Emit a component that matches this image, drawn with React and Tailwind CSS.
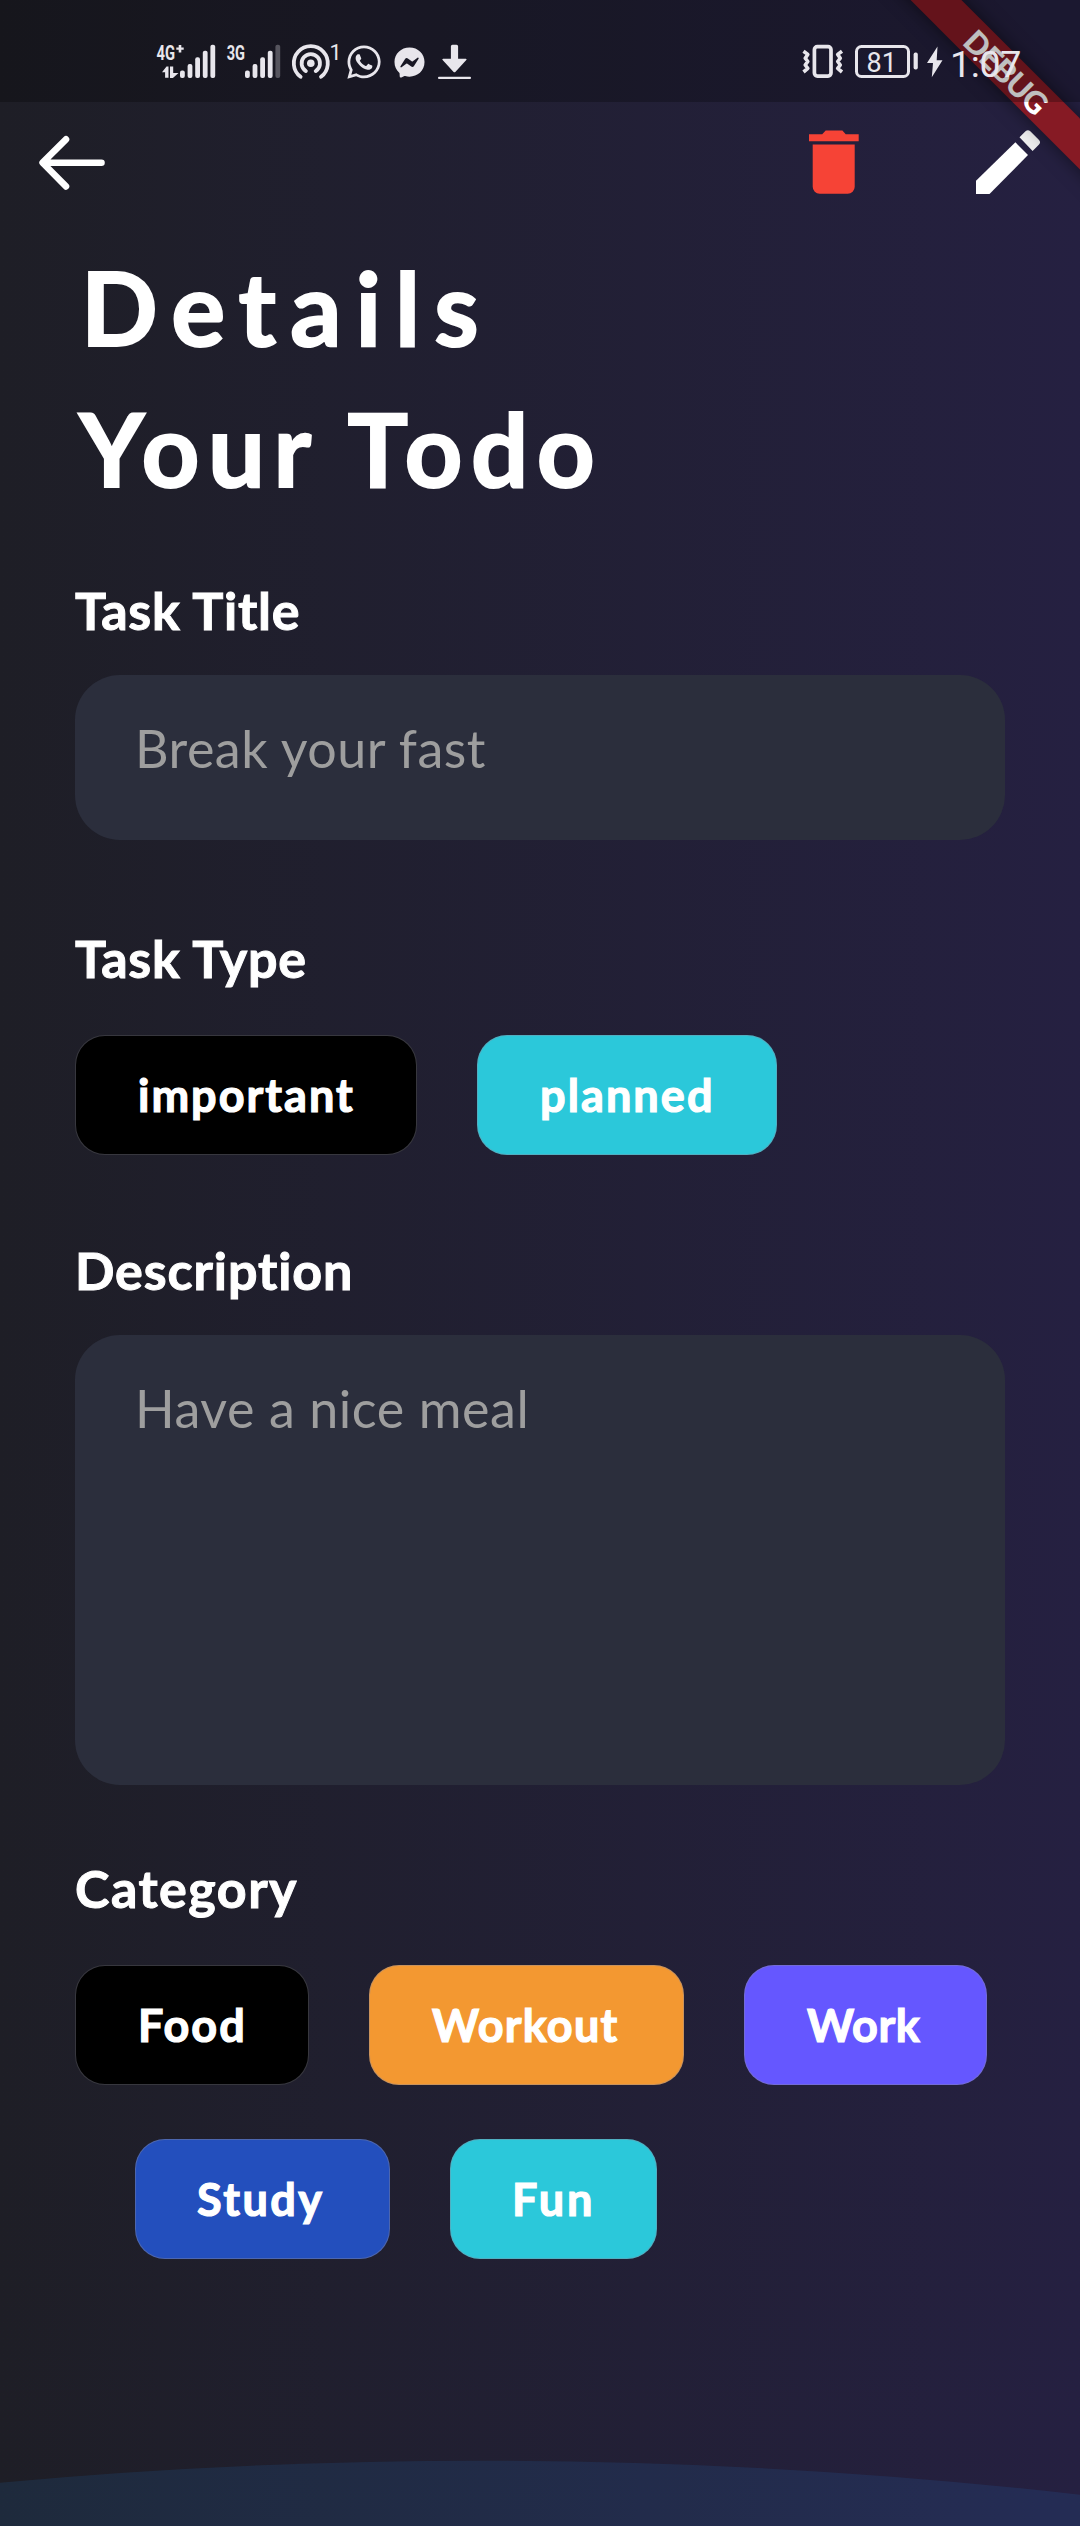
import { FaWhatsapp, FaFacebookMessenger } from "react-icons/fa";

const BAR_TOPS = [70.5, 64, 57.3, 50.7, 44.7];

function SignalBars({ start, dimLast }) {
  return BAR_TOPS.map((top, i) => (
    <rect
      key={top}
      x={start + i * 7.6}
      y={top}
      width="4.8"
      height={78 - top}
      rx="2"
      opacity={dimLast && i === 4 ? 0.3 : 1}
    />
  ));
}

function Signal4G() {
  return (
    <svg className="h-[40px] w-[60px] overflow-visible" viewBox="156 42 60 40" fill="currentColor">
      <text x="156.5" y="60" fontFamily="Roboto" fontWeight="700" fontSize="20" textLength="18.5" lengthAdjust="spacingAndGlyphs">4G</text>
      <path d="M178.7 45h2.6v2.4h2.4v2.4h-2.4v2.6h-2.6v-2.6h-2.4v-2.4h2.4z" />
      <path d="M166.5 66.5h2v11.3h-3.4v-5.6H162z" />
      <path d="M170 66.5h3.2v6.6h5.3l-5.6 4.9H170z" />
      <SignalBars start={180} />
    </svg>
  );
}

function Signal3G() {
  return (
    <svg className="h-[40px] w-[54px] overflow-visible" viewBox="227 42 54 40" fill="currentColor">
      <text x="226.7" y="60" fontFamily="Roboto" fontWeight="700" fontSize="20" textLength="18.3" lengthAdjust="spacingAndGlyphs">3G</text>
      <SignalBars start={245} dimLast />
    </svg>
  );
}

function Hotspot() {
  return (
    <svg className="h-[40px] w-[50px] overflow-visible" viewBox="290 42 50 40" fill="none" stroke="currentColor" strokeWidth="3.8" strokeLinecap="round">
      <circle cx="310.8" cy="63.3" r="3.8" fill="currentColor" stroke="none" />
      <path d="M305.9 71.1A9.2 9.2 0 1 1 315.7 71.1" />
      <path d="M300.6 76.8A17 17 0 1 1 321 76.8" />
      <text x="329.6" y="60.2" fontFamily="Roboto" fontSize="21.5" fill="currentColor" stroke="none">1</text>
    </svg>
  );
}

function Download() {
  return (
    <svg className="h-[40px] w-[34px]" viewBox="438 42 34 40" fill="currentColor">
      <path d="M452.5 44.7h4a1.6 1.6 0 0 1 1.6 1.6v12.4h7.6a.8.8 0 0 1 .6 1.4l-11 11.8a1.2 1.2 0 0 1-1.7 0l-11-11.8a.8.8 0 0 1 .6-1.4h7.7V46.3a1.6 1.6 0 0 1 1.6-1.6z" />
      <rect x="438" y="76.7" width="33" height="2.4" rx="1" />
    </svg>
  );
}

function Vibrate() {
  return (
    <svg className="h-[40px] w-[42px]" viewBox="802 42 42 40" fill="none" stroke="currentColor">
      <rect x="814.4" y="46.7" width="16.6" height="29.4" rx="3" strokeWidth="3.7" />
      <path d="M803.5 51.2l4.3 3.2-2.6 3.8 2.6 3.3-2.6 3.5 2.6 3.4-4.3 3.6M842 51.2l-4.3 3.2 2.6 3.8-2.6 3.3 2.6 3.5-2.6 3.4 4.3 3.6" strokeWidth="3.6" strokeLinejoin="round" />
    </svg>
  );
}

function Battery() {
  return (
    <svg className="h-[40px] w-[64px]" viewBox="855 42 64 40" fill="currentColor">
      <rect x="856.5" y="46.5" width="52" height="30" rx="5" fill="none" stroke="currentColor" strokeWidth="3" />
      <rect x="913.6" y="52.6" width="4.2" height="17" rx="1.8" />
      <text x="866.5" y="71.5" fontFamily="Roboto" fontSize="27" fontWeight="400">81</text>
    </svg>
  );
}

function Bolt() {
  return (
    <svg className="h-[40px] w-[16px]" viewBox="927 42 16 40" fill="currentColor">
      <path d="M937.5 46.5l-10.5 16.6h6l-1.2 14.2 10.7-17h-5.8z" />
    </svg>
  );
}

function StatusBar() {
  return (
    <header className="relative z-20 flex h-[102px] items-center bg-black/25 pt-[22px] text-[#e8e6ec]">
      <div className="ml-[156px] flex items-center">
        <Signal4G />
        <div className="ml-[11px] flex"><Signal3G /></div>
        <div className="ml-[9px] flex"><Hotspot /></div>
        <FaWhatsapp className="ml-[6px] h-[38px] w-[36px]" />
        <FaFacebookMessenger className="ml-[12px] h-[32px] w-[31px] pt-px" />
        <div className="ml-[13px] flex"><Download /></div>
      </div>
      <div className="mr-[58px] ml-auto flex items-center">
        <Vibrate />
        <div className="ml-[11px] flex"><Battery /></div>
        <div className="ml-[8px] flex"><Bolt /></div>
        <span className="mt-[4px] ml-[7px] w-[72px] font-['Roboto'] text-[37.5px] leading-[40px] font-normal tracking-[-0.3px] whitespace-nowrap">1:07</span>
      </div>
    </header>
  );
}

function DebugRibbon() {
  return (
    <div className="pointer-events-none absolute top-0 right-0 z-10 h-[300px] w-[300px] overflow-hidden">
      <div className="absolute top-[53px] left-[77px] flex h-[36px] w-[300px] rotate-45 items-center justify-center bg-[#861a24] pt-px font-['Lato'] text-[31px] leading-[36px] font-black tracking-[-0.8px] text-white shadow-[0_0_18px_rgba(0,0,0,0.5)]">
        DEBUG
      </div>
    </div>
  );
}

function Toolbar() {
  return (
    <nav className="flex h-[122px] items-center text-white">
      <button aria-label="Back" className="ml-[36px]">
        <svg className="h-[66px] w-[72px]" viewBox="36 130 72 66" fill="none" stroke="currentColor" strokeWidth="6.6" strokeLinecap="round" strokeLinejoin="round">
          <path d="M66 139.3L42.6 162.7L66 186.4M43 162.7H101.5" />
        </svg>
      </button>
      <button aria-label="Delete" className="ml-auto text-[#f64336]">
        <svg className="h-[66px] w-[50px]" viewBox="809.3 129.7 50 66" fill="currentColor">
          <path d="M809.3 134H822.5L826 130.2H842.7L846 134H859V141H809.3z" />
          <path d="M813 144.3H855V186.5a7 7 0 0 1-7 7H820a7 7 0 0 1-7-7z" />
        </svg>
      </button>
      <button aria-label="Edit" className="mr-[38px] ml-[115px]">
        <svg className="h-[66px] w-[68px]" viewBox="974 129.7 68 66" fill="currentColor">
          <path d="M1015.4 142L1028 154.7L989.5 193.7H976V180.500z" />
          <path d="M1019.5 137L1025.5 131a3.5 3.5 0 0 1 4.8 0L1038.8 139.5a3.5 3.5 0 0 1 0 5L1032.6 150.700z" fill="#eeeeee" />
        </svg>
      </button>
    </nav>
  );
}

function Label({ className, children }) {
  return <h2 className={`h-[62px] pt-px text-[52px] leading-[62px] font-bold whitespace-nowrap [-webkit-text-stroke:1px_white] ${className}`}>{children}</h2>;
}

function Chip({ className, children }) {
  return (
    <button className={`flex h-[120px] rounded-[30px] border border-[#8a8a9a]/40 pt-[32px] text-left text-[45px] leading-[54px] font-bold whitespace-nowrap [-webkit-text-stroke:1.2px_white] ${className}`}>
      {children}
    </button>
  );
}

export default function App() {
  return (
    <div className="relative h-[2526px] w-[1080px] overflow-hidden bg-linear-to-r from-[#1e1e26] to-[#252041] font-['Lato',sans-serif] text-white">
      <svg className="absolute bottom-0 left-0 h-[68px] w-[1080px]" viewBox="0 0 1080 68">
        <path d="M0 56.700V24.700Q241 2.700 482 2.700Q781 2.700 1080 36.700V68H0z" fill="#2196f3" fillOpacity="0.110" />
      </svg>
      <DebugRibbon />
      <StatusBar />
      <Toolbar />
      <main className="relative px-[75px]">
        <h1 className="mt-[13px] text-[101px] leading-[141px] font-bold whitespace-nowrap [-webkit-text-stroke:2px_white]">
          <span className="block pl-[6px] tracking-[14px]">Details</span>
          <span className="block pl-[4px] tracking-[8.5px]">Your Todo</span>
        </h1>

        <Label className="mt-[59px] tracking-[0.75px]">Task Title</Label>
        <div className="mt-[35px] h-[165px] rounded-[45px] bg-[#2b2e3c] pt-[42px] pl-[60px] text-[52px] leading-[62px] tracking-[0.5px] text-[#9e9e9e]">
          Break your fast
        </div>

        <Label className="mt-[86px] tracking-[0.75px]">Task Type</Label>
        <div className="mt-[47px] flex gap-[60px]">
          <Chip className="w-[342px] bg-black pl-[62px] tracking-[2px]">important</Chip>
          <Chip className="w-[300px] bg-[#2bc8da] pl-[62px] tracking-[2.1px]">planned</Chip>
        </div>

        <Label className="mt-[83px] tracking-[0.9px]">Description</Label>
        <div className="mt-[35px] h-[450px] rounded-[45px] bg-[#2b2e3c] pt-[42px] pl-[60px] text-[52px] leading-[62px] tracking-[0.57px] text-[#9e9e9e]">
          Have a nice meal
        </div>

        <Label className="mt-[71px] tracking-[1.5px]">Category</Label>
        <div className="mt-[47px] flex gap-[60px]">
          <Chip className="w-[234px] bg-black pl-[62px] tracking-[2px]">Food</Chip>
          <Chip className="w-[315px] bg-[#f39831] pl-[62px] tracking-[1.2px]">Workout</Chip>
          <Chip className="w-[243px] bg-[#6557ff] pl-[62px] tracking-[0.5px]">Work</Chip>
        </div>
        <div className="mt-[54px] ml-[60px] flex gap-[60px]">
          <Chip className="w-[255px] bg-[#234fbd] pl-[61px] tracking-[2.5px]">Study</Chip>
          <Chip className="w-[207px] bg-[#2bc8da] pl-[61px] tracking-[2.8px]">Fun</Chip>
        </div>
      </main>
    </div>
  );
}
